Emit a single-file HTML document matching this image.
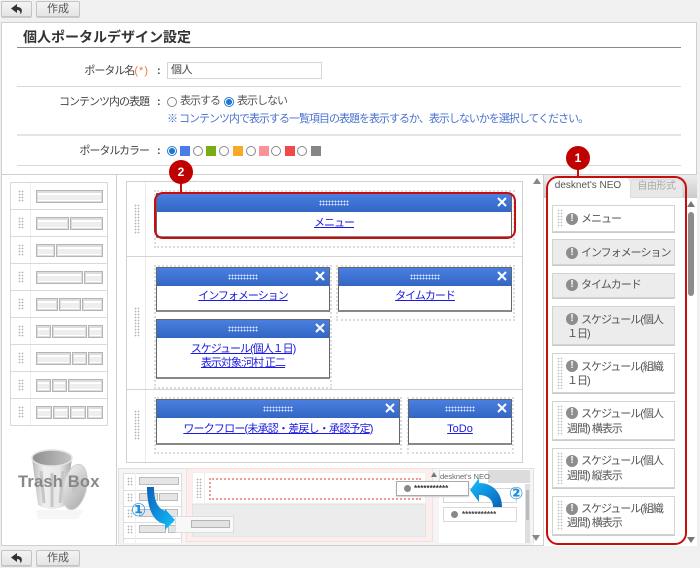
<!DOCTYPE html>
<html lang="ja">
<head>
<meta charset="utf-8">
<title>個人ポータルデザイン設定</title>
<style>
html,body{margin:0;padding:0}
body{width:700px;height:568px;position:relative;overflow:hidden;background:#f0f0f0;font-family:"Liberation Sans","Noto Sans CJK JP",sans-serif;font-size:11px;color:#444}
div,span,a,svg{position:absolute;box-sizing:border-box}
.t{white-space:nowrap;line-height:16px}
.s{letter-spacing:-1px}
.r{text-align:right}
.btn{height:16px;background:linear-gradient(#f4f4f4,#e4e4e4);border:1px solid #c4c4c4;border-radius:2px;box-shadow:0 1px 0 #ccc}
.ln{height:1px;left:17px;width:664px;background:#d8d8d8}
.rd{width:10px;height:10px;border:1px solid #888;border-radius:50%;background:#fff;top:146px}
.rd.on{border-color:#2a7bd0;background:radial-gradient(circle,#1e78d2 0 2.8px,#fff 3.2px)}
.sq{width:10px;height:10px;top:146px}
.row{left:10px;width:98px;height:28px;border:1px solid #d9d9d9;background:#fff}
.dr{background-image:radial-gradient(circle,#b5b5b5 0 .7px,transparent 1px);background-size:3px 3px}
.b{top:7px;height:13px;border:1px solid #b5b5b5;background:linear-gradient(#ddd 0 2px,#fff 2px 4px,#eee 4px 9px,#fff 9px);box-shadow:inset 0 0 0 1px #ddd}
.w{background:#fff;border:1px solid #666;border-bottom:2px solid #888;text-align:center}
.wh{left:0;right:0;top:0;height:18px;background:linear-gradient(#4a7fe0,#3366c4)}
.wd{top:6px;width:30px;height:6px;left:50%;margin-left:-15px;background-image:radial-gradient(circle,#dfe8fa 0 .8px,transparent 1px);background-size:3px 3px}
.x{right:3px;top:2px;width:12px;height:12px}
a{color:#1a1ae0;text-decoration:underline;left:0;right:0;line-height:14px;white-space:nowrap;letter-spacing:-1px}
.dot{border:2px dotted #dcdcdc}
.it{left:552px;width:123px;border:1px solid #d3d3d3;box-shadow:0 1px 0 #ccc;background:#fff;line-height:20px;color:#555}
.it.g{background:#ececec}
.ex{width:12px;height:12px;border-radius:50%;background:#8d8d8d;color:#fff;font:bold 10px/12px "Liberation Sans",sans-serif;text-align:center;left:13px;top:7px}
.it span{white-space:nowrap;letter-spacing:-1px;font-size:11px}
.it span.l{left:28px}
.it span.m{left:14px}
.grip{left:4px;top:3px;width:6px;bottom:3px;background-image:radial-gradient(circle,#c4c4c4 0 .7px,transparent 1px);background-size:3px 3px}
.num{width:24px;height:24px;border-radius:50%;background:#c00000;color:#fff;text-align:center;font:bold 12px/24px "Liberation Sans",sans-serif}
.mb{background:#e5e5e5;border:1px solid #bbb;height:8px}
</style>
</head>
<body>
<!-- top buttons -->
<div class="btn" style="left:1px;top:1px;width:31px"><svg style="left:9px;top:2px" width="13" height="11" viewBox="0 0 13 11"><path d="M6 0 L0 4.5 L6 9 V6 C8.500 6 9.500 7.500 9.500 10.500 C11.500 8 12 3 6 3 Z" fill="#333"/></svg></div>
<div class="btn t" style="left:36px;top:1px;width:44px;text-align:center;line-height:14px;color:#555">作成</div>

<!-- main panel -->
<div style="left:1px;top:22px;width:696px;height:524px;background:#fff;border:1px solid #cfcfcf"></div>
<div class="t" style="left:23px;top:27px;font-size:14px;font-weight:bold;line-height:20px;color:#333">個人ポータルデザイン設定</div>
<div style="left:17px;top:47px;width:664px;height:1px;background:#888"></div>

<div class="t r s" style="left:40px;width:109px;top:63px;color:#444">ポータル名<span style="position:static;color:#f07830;letter-spacing:1px">(*)</span></div>
<div class="t" style="left:157px;top:63px;font-weight:bold">:</div>
<div style="left:167px;top:62px;width:155px;height:17px;border:1px solid #d5d5d5;background:#fff;line-height:15px;padding-left:3px;color:#444;letter-spacing:-.5px">個人</div>
<div class="ln" style="top:86px"></div>

<div class="t r s" style="left:40px;width:109px;top:94px;color:#444">コンテンツ内の表題</div>
<div class="t" style="left:157px;top:94px;font-weight:bold">:</div>
<div class="rd" style="left:167px;top:97px"></div>
<div class="t s" style="left:180px;top:93px;color:#555">表示する</div>
<div class="rd on" style="left:224px;top:97px"></div>
<div class="t s" style="left:237px;top:93px;color:#555">表示しない</div>
<div class="t s" style="left:167px;top:111px;color:#4a70d0">※ コンテンツ内で表示する一覧項目の表題を表示するか、表示しないかを選択してください。</div>
<div class="ln" style="top:134px;height:2px;background:#e4e4e4"></div>

<div class="t r s" style="left:40px;width:109px;top:143px;color:#444">ポータルカラー</div>
<div class="t" style="left:157px;top:143px;font-weight:bold">:</div>
<div class="rd on" style="left:167px"></div><div class="sq" style="left:180px;background:#4a7de8"></div>
<div class="rd" style="left:193px"></div><div class="sq" style="left:206px;background:#7aad14"></div>
<div class="rd" style="left:219px"></div><div class="sq" style="left:233px;background:#fba824"></div>
<div class="rd" style="left:246px"></div><div class="sq" style="left:259px;background:#fb9298"></div>
<div class="rd" style="left:271px"></div><div class="sq" style="left:285px;background:#ee4a4a"></div>
<div class="rd" style="left:297px"></div><div class="sq" style="left:311px;background:#868686"></div>
<div class="ln" style="top:165px"></div>

<!-- section lines -->
<div style="left:1px;top:174px;width:696px;height:1px;background:#cfcfcf"></div>
<div style="left:116px;top:174px;width:1px;height:372px;background:#cfcfcf"></div>

<!-- layout list -->
<div class="row" style="top:182px"><div class="dr" style="left:7px;top:7px;width:6px;height:12px"></div><div style="left:19px;top:0;bottom:0;width:1px;background:#eee"></div><div class="b" style="left:25px;width:67px"></div></div>
<div class="row" style="top:209px"><div class="dr" style="left:7px;top:7px;width:6px;height:12px"></div><div style="left:19px;top:0;bottom:0;width:1px;background:#eee"></div><div class="b" style="left:25px;width:33px"></div><div class="b" style="left:59px;width:33px"></div></div>
<div class="row" style="top:236px"><div class="dr" style="left:7px;top:7px;width:6px;height:12px"></div><div style="left:19px;top:0;bottom:0;width:1px;background:#eee"></div><div class="b" style="left:25px;width:19px"></div><div class="b" style="left:45px;width:47px"></div></div>
<div class="row" style="top:263px"><div class="dr" style="left:7px;top:7px;width:6px;height:12px"></div><div style="left:19px;top:0;bottom:0;width:1px;background:#eee"></div><div class="b" style="left:25px;width:47px"></div><div class="b" style="left:73px;width:19px"></div></div>
<div class="row" style="top:290px"><div class="dr" style="left:7px;top:7px;width:6px;height:12px"></div><div style="left:19px;top:0;bottom:0;width:1px;background:#eee"></div><div class="b" style="left:25px;width:22px"></div><div class="b" style="left:48px;width:22px"></div><div class="b" style="left:71px;width:21px"></div></div>
<div class="row" style="top:317px"><div class="dr" style="left:7px;top:7px;width:6px;height:12px"></div><div style="left:19px;top:0;bottom:0;width:1px;background:#eee"></div><div class="b" style="left:25px;width:15px"></div><div class="b" style="left:41px;width:35px"></div><div class="b" style="left:77px;width:15px"></div></div>
<div class="row" style="top:344px"><div class="dr" style="left:7px;top:7px;width:6px;height:12px"></div><div style="left:19px;top:0;bottom:0;width:1px;background:#eee"></div><div class="b" style="left:25px;width:35px"></div><div class="b" style="left:61px;width:15px"></div><div class="b" style="left:77px;width:15px"></div></div>
<div class="row" style="top:371px"><div class="dr" style="left:7px;top:7px;width:6px;height:12px"></div><div style="left:19px;top:0;bottom:0;width:1px;background:#eee"></div><div class="b" style="left:25px;width:15px"></div><div class="b" style="left:41px;width:15px"></div><div class="b" style="left:57px;width:35px"></div></div>
<div class="row" style="top:398px"><div class="dr" style="left:7px;top:7px;width:6px;height:12px"></div><div style="left:19px;top:0;bottom:0;width:1px;background:#eee"></div><div class="b" style="left:25px;width:16px"></div><div class="b" style="left:42px;width:16px"></div><div class="b" style="left:59px;width:16px"></div><div class="b" style="left:76px;width:16px"></div></div>

<!-- trash -->
<svg style="left:16px;top:445px" width="90" height="80" viewBox="0 0 90 80">
<defs>
<linearGradient id="cg" x1="0" x2="1" y1="0" y2="0"><stop offset="0" stop-color="#b8b8b8"/><stop offset=".3" stop-color="#efefef"/><stop offset=".7" stop-color="#e6e6e6"/><stop offset="1" stop-color="#a8a8a8"/></linearGradient>
<linearGradient id="lg" x1="0" x2="1" y1="0" y2="1"><stop offset="0" stop-color="#f4f4f4"/><stop offset="1" stop-color="#a8a8a8"/></linearGradient>
<linearGradient id="ig" x1="0" x2="1" y1="0" y2="0"><stop offset="0" stop-color="#8e8e8e"/><stop offset="1" stop-color="#c4c4c4"/></linearGradient>
</defs>
<path d="M16 13 L22 60 Q36 68 50 60 L56 13 Z" fill="url(#cg)"/>
<path d="M25 26 L28 58 M36 28 L36 62 M47 26 L44 58" stroke="#c6c6c6" stroke-width="3" fill="none"/>
<ellipse cx="36" cy="13" rx="20" ry="8" fill="url(#ig)" stroke="#e2e2e2" stroke-width="1.500"/>
<ellipse cx="59" cy="42" rx="11.500" ry="23" transform="rotate(12 59 42)" fill="url(#lg)" stroke="#cfcfcf"/>
<ellipse cx="60" cy="42" rx="4" ry="8" transform="rotate(12 60 42)" fill="#c4c4c4"/>
<path d="M20 65 H68 L62 74 H22 Z" fill="#f6f6f6"/>
</svg>
<div class="t" style="left:18px;top:472px;font-size:16.500px;line-height:20px;font-weight:bold;color:#888;letter-spacing:.2px">Trash Box</div>

<!-- center -->
<div style="left:126px;top:181px;width:397px;height:282px;border:1px solid #d0d0d0;background:#fff"></div>
<div style="left:145px;top:182px;width:1px;height:280px;background:#eaeaea"></div>
<div style="left:127px;top:256px;width:395px;height:1px;background:#d4d4d4"></div>
<div style="left:127px;top:389px;width:395px;height:1px;background:#d4d4d4"></div>
<div class="dr" style="left:134px;top:204px;width:6px;height:30px"></div>
<div class="dr" style="left:134px;top:307px;width:6px;height:30px"></div>
<div class="dr" style="left:134px;top:410px;width:6px;height:30px"></div>

<div class="dot" style="left:154px;top:190px;width:361px;height:58px"></div>
<div class="dot" style="left:154px;top:265px;width:178px;height:124px"></div>
<div class="dot" style="left:336px;top:265px;width:179px;height:56px"></div>
<div class="dot" style="left:154px;top:397px;width:248px;height:57px"></div>
<div class="dot" style="left:407px;top:397px;width:107px;height:57px"></div>

<div class="w" style="left:156px;top:193px;width:356px;height:45px"><div class="wh"></div><div class="wd"></div><svg class="x" viewBox="0 0 12 12"><path d="M2 2 L10 10 M10 2 L2 10" stroke="#fff" stroke-width="2"/></svg><a href="#" style="top:22px">メニュー</a></div>
<div class="w" style="left:156px;top:267px;width:174px;height:45px"><div class="wh"></div><div class="wd"></div><svg class="x" viewBox="0 0 12 12"><path d="M2 2 L10 10 M10 2 L2 10" stroke="#fff" stroke-width="2"/></svg><a href="#" style="top:21px">インフォメーション</a></div>
<div class="w" style="left:338px;top:267px;width:174px;height:45px"><div class="wh"></div><div class="wd"></div><svg class="x" viewBox="0 0 12 12"><path d="M2 2 L10 10 M10 2 L2 10" stroke="#fff" stroke-width="2"/></svg><a href="#" style="top:21px">タイムカード</a></div>
<div class="w" style="left:156px;top:319px;width:174px;height:60px"><div class="wh"></div><div class="wd"></div><svg class="x" viewBox="0 0 12 12"><path d="M2 2 L10 10 M10 2 L2 10" stroke="#fff" stroke-width="2"/></svg><a href="#" style="top:22px">スケジュール(個人１日)</a><a href="#" style="top:36px">表示対象:河村 正二</a></div>
<div class="w" style="left:156px;top:399px;width:244px;height:46px"><div class="wh"></div><div class="wd"></div><svg class="x" viewBox="0 0 12 12"><path d="M2 2 L10 10 M10 2 L2 10" stroke="#fff" stroke-width="2"/></svg><a href="#" style="top:22px;letter-spacing:-.8px">ワークフロー(未承認・差戻し・承認予定)</a></div>
<div class="w" style="left:408px;top:399px;width:104px;height:46px"><div class="wh"></div><div class="wd"></div><svg class="x" viewBox="0 0 12 12"><path d="M2 2 L10 10 M10 2 L2 10" stroke="#fff" stroke-width="2"/></svg><a href="#" style="top:22px;letter-spacing:0">ToDo</a></div>

<div style="left:154px;top:192px;width:362px;height:47px;border:2px solid #c80d0d;border-radius:9px"></div>
<div style="left:180px;top:180px;width:2px;height:13px;background:#c80d0d"></div>
<div class="num" style="left:169px;top:160px">2</div>

<!-- center scroll arrow -->
<svg style="left:533px;top:178px" width="8" height="6"><path d="M0 6 L4 0 L8 6Z" fill="#888"/></svg>

<!-- right panel -->
<div style="left:543px;top:175px;width:154px;height:371px;background:#fff;border-left:1px solid #cfcfcf"></div>
<div style="left:544px;top:175px;width:153px;height:23px;background:linear-gradient(#ececec,#cbcbcb)"></div>
<div class="t" style="left:546px;top:178px;width:84px;height:20px;background:#fff;border-radius:5px 5px 0 0;text-align:center;line-height:16px;font-size:10px;color:#555">desknet's NEO</div>
<div class="t" style="left:630px;top:179px;width:53px;height:19px;background:#e8e8e8;border:1px solid #dcdcdc;border-radius:5px 5px 0 0;text-align:center;line-height:14px;font-size:10px;letter-spacing:-.5px;color:#aaa">自由形式</div>

<div class="it" style="top:205px;height:27px"><div class="grip"></div><div class="ex">!</div><span class="l" style="top:3px">メニュー</span></div>
<div class="it g" style="top:239px;height:26px"><div class="ex">!</div><span class="l" style="top:3px">インフォメーション</span></div>
<div class="it g" style="top:273px;height:25px"><div class="ex" style="top:5px">!</div><span class="l" style="top:1px">タイムカード</span></div>
<div class="it g" style="top:306px;height:39px"><div class="ex" style="top:6px">!</div><span class="l" style="top:3px">スケジュール(個人</span><span class="m" style="top:17px">１日)</span></div>
<div class="it" style="top:353px;height:40px"><div class="grip"></div><div class="ex" style="top:6px">!</div><span class="l" style="top:3px">スケジュール(組織</span><span class="m" style="top:17px">１日)</span></div>
<div class="it" style="top:401px;height:39px"><div class="grip"></div><div class="ex" style="top:5px">!</div><span class="l" style="top:2px">スケジュール(個人</span><span class="m" style="top:17px">週間) 横表示</span></div>
<div class="it" style="top:448px;height:40px"><div class="grip"></div><div class="ex" style="top:6px">!</div><span class="l" style="top:2px">スケジュール(個人</span><span class="m" style="top:17px">週間) 縦表示</span></div>
<div class="it" style="top:496px;height:39px"><div class="grip"></div><div class="ex" style="top:6px">!</div><span class="l" style="top:2px">スケジュール(組織</span><span class="m" style="top:16px">週間) 横表示</span></div>

<!-- right scrollbar -->
<svg style="left:687px;top:201px" width="8" height="6"><path d="M0 6 L4 0 L8 6Z" fill="#777"/></svg>
<div style="left:688px;top:212px;width:6px;height:84px;background:#8c8c8c;border-radius:3px"></div>
<svg style="left:687px;top:537px" width="8" height="6"><path d="M0 0 L4 6 L8 0Z" fill="#777"/></svg>

<div style="left:546px;top:176px;width:141px;height:369px;border:2px solid #c80d0d;border-radius:12px"></div>
<div style="left:577px;top:165px;width:2px;height:12px;background:#c80d0d"></div>
<div class="num" style="left:566px;top:146px">1</div>

<!-- illustration -->
<div style="left:118px;top:468px;width:416px;height:76px;background:#f5f5f5;border:1px solid #e0e0e0;border-bottom:0"></div>
<div style="left:123px;top:473px;width:59px;height:70px;background:#fff;border:1px solid #ddd;border-bottom:0"></div>
<div style="left:123px;top:490px;width:59px;height:1px;background:#ddd"></div>
<div style="left:123px;top:506px;width:59px;height:1px;background:#ddd"></div>
<div style="left:123px;top:522px;width:59px;height:1px;background:#ddd"></div>
<div style="left:123px;top:538px;width:59px;height:1px;background:#ddd"></div>
<div style="left:135px;top:473px;width:1px;height:70px;background:#eee"></div>
<div class="dr" style="left:127px;top:477px;width:6px;height:9px"></div>
<div class="dr" style="left:127px;top:493px;width:6px;height:9px"></div>
<div class="dr" style="left:127px;top:509px;width:6px;height:9px"></div>
<div class="dr" style="left:127px;top:525px;width:6px;height:9px"></div>
<div class="mb" style="left:139px;top:477px;width:40px"></div>
<div class="mb" style="left:139px;top:493px;width:19px"></div>
<div class="mb" style="left:159px;top:493px;width:19px"></div>
<div class="mb" style="left:139px;top:509px;width:19px"></div>
<div class="mb" style="left:159px;top:509px;width:19px"></div>
<div class="mb" style="left:139px;top:525px;width:27px"></div>
<div class="mb" style="left:168px;top:525px;width:11px"></div>

<div style="left:186px;top:468px;width:247px;height:74px;background:#fdeeee;border:1px solid #f5dede"></div>
<div style="left:192px;top:472px;width:234px;height:32px;background:#fff;border:1px solid #eee"></div>
<div class="dr" style="left:196px;top:478px;width:6px;height:20px"></div>
<div style="left:204px;top:473px;width:1px;height:30px;background:#eee"></div>
<div style="left:209px;top:478px;width:212px;height:22px;border:2px dotted #f29a9a"></div>
<div style="left:192px;top:504px;width:234px;height:33px;background:#ececec;border:1px solid #e4e4e4"></div>
<svg style="left:431px;top:472px" width="6" height="5"><path d="M0 5 L3 0 L6 5Z" fill="#777"/></svg>

<div style="left:439px;top:469px;width:91px;height:75px;background:#fff"></div>
<div style="left:439px;top:470px;width:91px;height:13px;background:#dcdcdc"></div>
<div style="left:440px;top:471px;width:48px;height:12px;background:#fff;font-size:7.500px;line-height:11px;text-align:center;white-space:nowrap;color:#666">desknet's NEO</div>
<div style="left:443px;top:488px;width:74px;height:15px;background:#fff;border:1px solid #d8d8d8"></div>
<div style="left:443px;top:507px;width:74px;height:15px;background:#fff;border:1px solid #d8d8d8;font-size:8px;line-height:13px;padding-left:18px;font-weight:bold;color:#444;white-space:nowrap">***********</div>
<div style="left:451px;top:511px;width:7px;height:7px;background:#888;border-radius:50%"></div>
<div style="left:396px;top:481px;width:73px;height:15px;background:#fff;border:1px solid #aaa;font-size:8px;line-height:13px;padding-left:17px;font-weight:bold;color:#333;white-space:nowrap;box-shadow:0 1px 1px #ccc">***********</div>
<div style="left:404px;top:485px;width:7px;height:7px;background:#888;border-radius:50%"></div>
<div style="left:525px;top:484px;width:5px;height:60px;background:#dedede"></div>
<div style="left:526px;top:490px;width:3px;height:30px;background:#bbb"></div>

<div style="left:175px;top:516px;width:59px;height:17px;background:#f8f8f8;border:1px solid #ddd"></div>
<div style="left:191px;top:520px;width:39px;height:8px;background:#e2e2e2;border:1px solid #b5b5b5"></div>
<div style="left:119px;top:543px;width:415px;height:2px;background:#f3f3f3"></div>

<svg style="left:140px;top:480px" width="45" height="52" viewBox="0 0 45 52">
<defs><linearGradient id="a1" x1="0" y1="0" x2="1" y2="1"><stop offset="0" stop-color="#0a5fb8"/><stop offset="1" stop-color="#14c4ff"/></linearGradient></defs>
<path d="M7 7 H14 C14 20 17 28 25 31 V29 L35 40 L25 50 V44 C12 42 7 26 7 7Z" fill="url(#a1)"/>
</svg>
<div style="left:131px;top:500px;line-height:22px;font-size:18px;font-weight:bold;color:#1b8fe0;font-family:'DejaVu Sans',sans-serif">①</div>

<svg style="left:468px;top:476px" width="38" height="32" viewBox="0 0 38 32">
<defs><linearGradient id="a2" x1="0" y1="0" x2="1" y2="1"><stop offset="0" stop-color="#14c4ff"/><stop offset="1" stop-color="#0a5fb8"/></linearGradient></defs>
<path d="M2 14 L11 2 V7 C24 7 34 16 34 31 H25 C25 24 20 19 11 19 V26Z" fill="url(#a2)"/>
</svg>
<div style="left:509px;top:483px;line-height:22px;font-size:17px;font-weight:bold;color:#1b8fe0;font-family:'DejaVu Sans',sans-serif">②</div>
<svg style="left:532px;top:535px" width="8" height="6"><path d="M0 0 L4 6 L8 0Z" fill="#888"/></svg>

<!-- bottom -->
<div class="btn" style="left:1px;top:550px;width:31px"><svg style="left:9px;top:2px" width="13" height="11" viewBox="0 0 13 11"><path d="M6 0 L0 4.5 L6 9 V6 C8.500 6 9.500 7.500 9.500 10.500 C11.500 8 12 3 6 3 Z" fill="#333"/></svg></div>
<div class="btn t" style="left:36px;top:550px;width:44px;text-align:center;line-height:14px;color:#555">作成</div>
</body>
</html>
